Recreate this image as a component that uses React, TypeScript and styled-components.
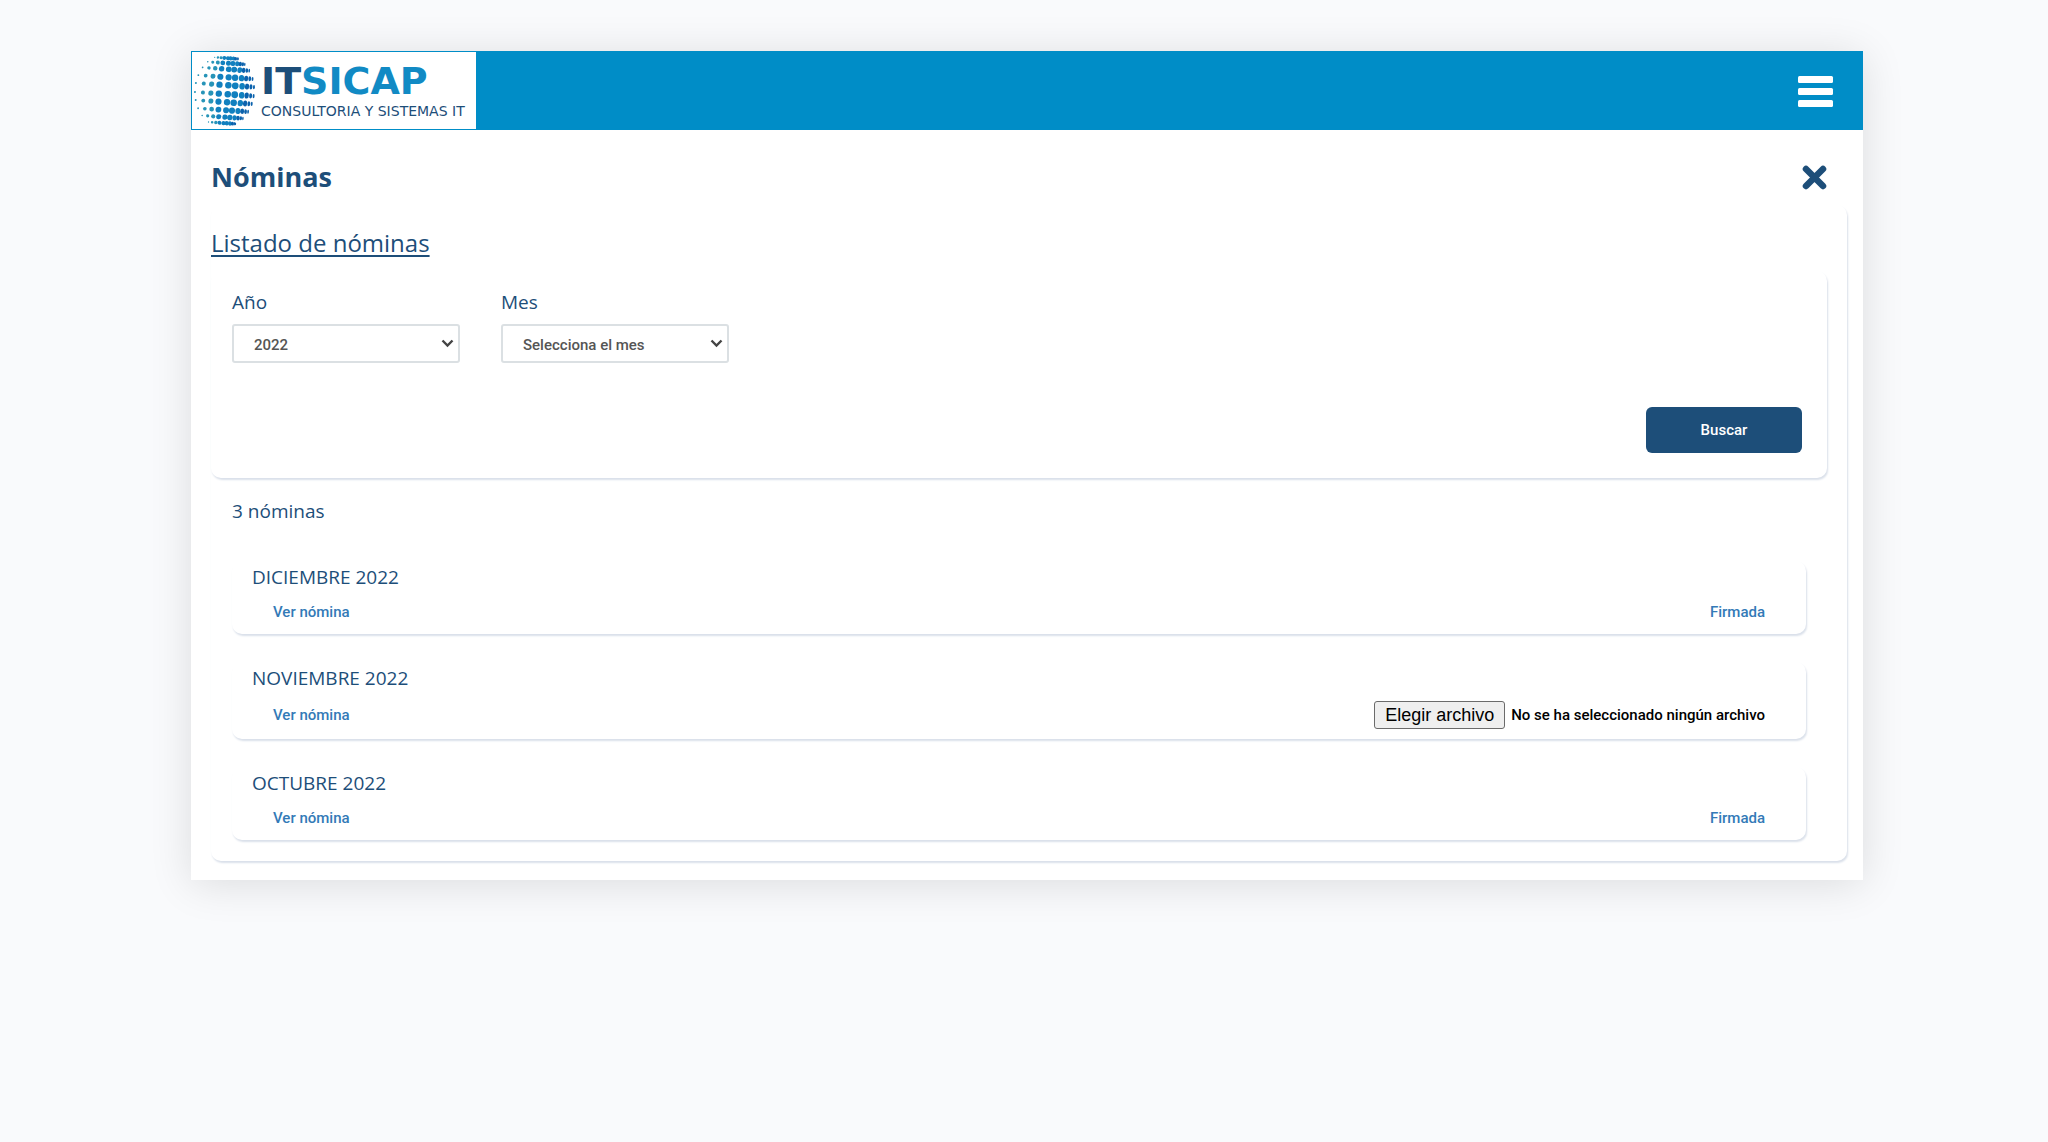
import React, { useRef, useState } from "react";
import styled, { createGlobalStyle } from "styled-components";

const navy = "#1d4e79";
const sky = "#008dc7";
const heading = `"Open Sans", "Noto Sans", sans-serif`;
const body = `Roboto, "Liberation Sans", sans-serif`;

const GlobalStyle = createGlobalStyle`
  *, *::before, *::after { box-sizing: border-box; }
  body {
    margin: 0;
    background: #f9fafc;
    color: ${navy};
    font-family: ${body};
    font-size: 15px;
    line-height: 24px;
  }
  button, select, input { font: inherit; }
`;

const Page = styled.div`
  padding: 51px 185px 60px 191px;
`;

const Shell = styled.div`
  background: #fff;
  box-shadow: 0 4px 40px rgba(0, 0, 0, 0.12);
  padding-bottom: 19px;
`;

const TopBar = styled.header`
  display: flex;
  align-items: center;
  justify-content: space-between;
  height: 79px;
  padding: 1px 29px 1px 1px;
  background: ${sky};
`;

const Brand = styled.a`
  display: flex;
  align-items: center;
  gap: 4px;
  width: 284px;
  height: 77px;
  padding-left: 1px;
  background: #fff;
  text-decoration: none;
  overflow: hidden;
`;

const BrandText = styled.span`
  display: flex;
  flex-direction: column;
  padding-bottom: 4px;
  font-family: "DejaVu Sans", sans-serif;
  color: ${navy};
`;

const Wordmark = styled.span`
  font-size: 38px;
  font-weight: 700;
  line-height: 44px;
`;

const WordmarkAccent = styled.span`
  color: #118ac4;
`;

const Tagline = styled.span`
  font-size: 14px;
  line-height: 16px;
  white-space: nowrap;
`;

const IconButton = styled.button`
  display: flex;
  padding: 0;
  border: 0;
  background: none;
  color: inherit;
  cursor: pointer;
`;

const TitleRow = styled.div`
  display: flex;
  align-items: center;
  justify-content: space-between;
  padding: 27px 35px 8px 20px;
`;

const Title = styled.h1`
  margin: 0;
  font-family: ${heading};
  font-size: 27px;
  font-weight: 700;
  line-height: 40px;
`;

const Card = styled.section`
  border-radius: 10px;
  background: #fff;
  box-shadow: 1px 2px 2px #dae0ea;
`;

const Panel = styled(Card)`
  margin: 0 16px 0 20px;
  padding: 20px 20px 21px 0;
`;

const Subtitle = styled.h2`
  margin: 0 0 10px;
  font-family: ${heading};
  font-size: 24px;
  font-weight: 400;
  line-height: 36px;
  text-decoration: underline;
  text-decoration-thickness: 2px;
  text-underline-offset: 3px;
`;

const FilterCard = styled(Card).attrs({ as: "form" })`
  display: flex;
  flex-direction: column;
  gap: 44px;
  padding: 17px 25px 25px 21px;
`;

const Fields = styled.div`
  display: flex;
  gap: 41px;
`;

const Field = styled.div`
  display: flex;
  flex-direction: column;
  gap: 8px;
  width: 228px;
`;

const Label = styled.label`
  font-family: ${heading};
  font-size: 19px;
  line-height: 28px;
`;

const SelectBox = styled.div`
  display: grid;
  align-items: center;
  > * { grid-area: 1 / 1; }
  svg { justify-self: end; margin-right: 6px; pointer-events: none; }
`;

const Select = styled.select`
  width: 100%;
  height: 39px;
  padding: 2px 20px 0;
  border: 2px solid #dbe0e3;
  border-radius: 3px;
  background: #fff;
  color: #555;
  font-weight: 500;
  appearance: none;
`;

const SubmitButton = styled.button`
  align-self: flex-end;
  width: 156px;
  height: 46px;
  border: 0;
  border-radius: 6px;
  background: ${navy};
  color: #fff;
  font-weight: 500;
  cursor: pointer;
`;

const Count = styled.p`
  margin: 0;
  padding: 19px 21px 36px;
  font-family: ${heading};
  font-size: 19px;
  line-height: 28px;
`;

const PayrollList = styled.ul`
  display: flex;
  flex-direction: column;
  gap: 28px;
  margin: 0;
  padding: 0 21px;
  list-style: none;
`;

const PayrollCard = styled(Card).attrs({ as: "li" })`
  padding: 0 41px 7px 20px;
`;

const Month = styled.h3`
  margin: 0;
  font-family: ${heading};
  font-size: 19px;
  font-weight: 400;
  line-height: 32px;
`;

const Actions = styled.div`
  display: flex;
  align-items: center;
  justify-content: space-between;
  padding: 3px 0 0 21px;
  min-height: 34px;
`;

const Link = styled.a`
  color: #337ab7;
  font-weight: 500;
  text-decoration: none;
`;

const FilePicker = styled.div`
  display: flex;
  align-items: center;
  gap: 6px;
  height: 35px;
  color: #000;
`;

const FileInput = styled.input`
  display: none;
`;

const FileButton = styled.button`
  height: 28px;
  padding: 0 10px;
  border: 1px solid #6b6b6b;
  border-radius: 3px;
  background: #efefef;
  color: #000;
  font-family: "Liberation Sans", Arial, sans-serif;
  font-size: 18px;
  line-height: 24px;
`;

const FileName = styled.span`
  font-weight: 500;
`;

const globeColumns = [
  { x: 2, r: 1 },
  { x: 10, r: 2 },
  { x: 18, r: 2.6 },
  { x: 26, r: 3.2 },
  { x: 35, r: 3.3 },
  { x: 42, r: 3.4 },
  { x: 49, r: 3.3 },
  { x: 54, r: 3 },
  { x: 58, r: 2.6 },
  { x: 61, r: 2.2 },
];
const globeRows = [3, 8, 14, 22, 30, 39, 47, 55, 62, 68];

function Globe() {
  return (
    <svg width="64" height="72" viewBox="0 0 64 72" aria-hidden="true">
      <g transform="rotate(4 31 36)">
        {globeRows.map((y) => {
          const width = Math.sqrt(1 - ((y - 36) / 36) ** 2);
          const scale = 0.35 + 0.65 * width;
          return globeColumns.map(({ x, r }, col) => (
            <ellipse
              key={`${x}:${y}`}
              cx={31 + (x - 31) * width}
              cy={y}
              rx={r * scale * (col > 5 ? 1 - (col - 5) * 0.14 : 1)}
              ry={r * scale}
              fill={col > 6 ? "#0b62ad" : col > 2 ? "#1180bf" : "#2794b8"}
            />
          ));
        })}
      </g>
    </svg>
  );
}

function MenuIcon() {
  return (
    <svg width="36" height="32" viewBox="0 0 36 32" fill="#fff" aria-hidden="true">
      <rect x="0" y="1" width="35" height="7" rx="1.5" />
      <rect x="0" y="13" width="35" height="7" rx="1.5" />
      <rect x="0" y="25" width="35" height="7" rx="1.5" />
    </svg>
  );
}

function CloseIcon() {
  return (
    <svg width="27" height="27" viewBox="0 0 27 27" aria-hidden="true">
      <path d="M5 5 22 22M22 5 5 22" stroke={navy} strokeWidth="6.5" strokeLinecap="round" />
    </svg>
  );
}

function Chevron() {
  return (
    <svg width="13" height="9" viewBox="0 0 13 9" fill="none" aria-hidden="true">
      <path d="M1.5 1.5 6.5 6.5 11.5 1.5" stroke="#444" strokeWidth="2.4" />
    </svg>
  );
}

function SelectField({ id, label, options }: { id: string; label: string; options: string[] }) {
  return (
    <Field>
      <Label htmlFor={id}>{label}</Label>
      <SelectBox>
        <Select id={id}>
          {options.map((option) => (
            <option key={option}>{option}</option>
          ))}
        </Select>
        <Chevron />
      </SelectBox>
    </Field>
  );
}

function FileUpload() {
  const input = useRef<HTMLInputElement>(null);
  const [name, setName] = useState("No se ha seleccionado ningún archivo");
  return (
    <FilePicker>
      <FileInput
        ref={input}
        type="file"
        aria-label="Elegir archivo"
        onChange={(event) => setName(event.target.files?.[0]?.name ?? name)}
      />
      <FileButton type="button" onClick={() => input.current?.click()}>
        Elegir archivo
      </FileButton>
      <FileName>{name}</FileName>
    </FilePicker>
  );
}

const payrolls = [
  { month: "DICIEMBRE 2022", signed: true },
  { month: "NOVIEMBRE 2022", signed: false },
  { month: "OCTUBRE 2022", signed: true },
];

export default function App() {
  return (
    <Page>
      <GlobalStyle />
      <Shell>
        <TopBar>
          <Brand href="#">
            <Globe />
            <BrandText>
              <Wordmark>
                IT<WordmarkAccent>SICAP</WordmarkAccent>
              </Wordmark>
              <Tagline>CONSULTORIA Y SISTEMAS IT</Tagline>
            </BrandText>
          </Brand>
          <IconButton type="button" aria-label="Menú">
            <MenuIcon />
          </IconButton>
        </TopBar>
        <main>
          <TitleRow>
            <Title>Nóminas</Title>
            <IconButton type="button" aria-label="Cerrar">
              <CloseIcon />
            </IconButton>
          </TitleRow>
          <Panel>
            <Subtitle>Listado de nóminas</Subtitle>
            <FilterCard>
              <Fields>
                <SelectField id="year" label="Año" options={["2022"]} />
                <SelectField id="month" label="Mes" options={["Selecciona el mes"]} />
              </Fields>
              <SubmitButton type="button">Buscar</SubmitButton>
            </FilterCard>
            <Count>3 nóminas</Count>
            <PayrollList>
              {payrolls.map(({ month, signed }) => (
                <PayrollCard key={month}>
                  <Month>{month}</Month>
                  <Actions>
                    <Link href="#">Ver nómina</Link>
                    {signed ? <Link href="#">Firmada</Link> : <FileUpload />}
                  </Actions>
                </PayrollCard>
              ))}
            </PayrollList>
          </Panel>
        </main>
      </Shell>
    </Page>
  );
}
